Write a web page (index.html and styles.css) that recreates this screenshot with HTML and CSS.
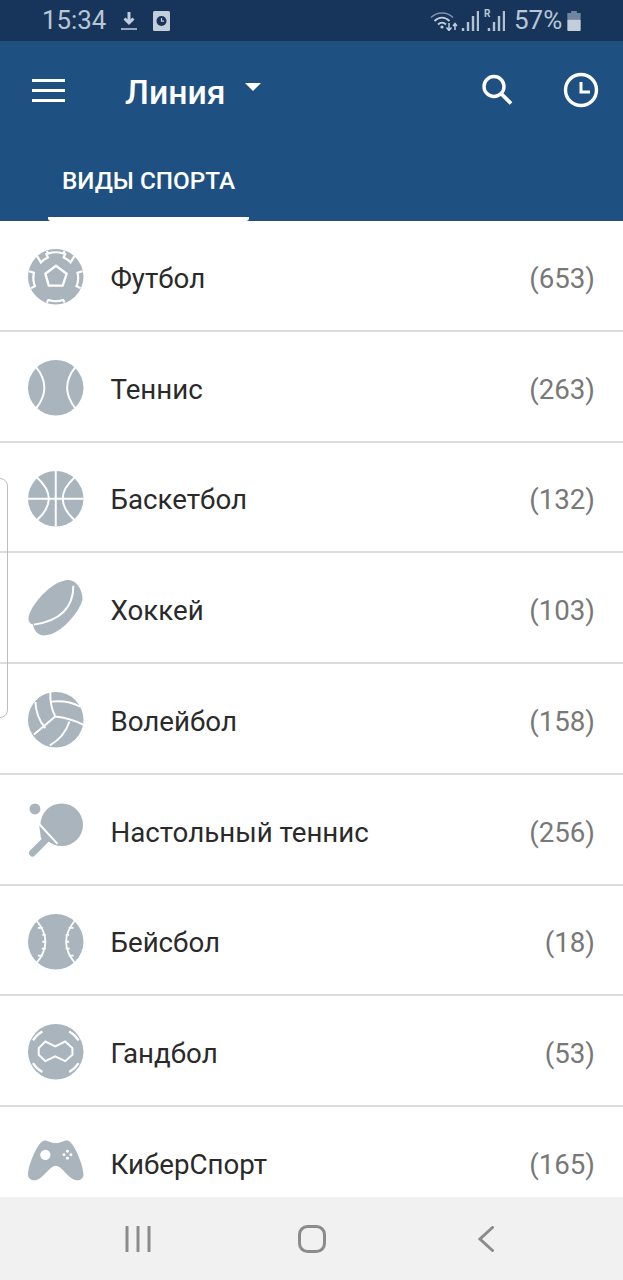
FILE: index.html
```html
<!DOCTYPE html>
<html lang="ru">
<head>
<meta charset="utf-8">
<title>Линия</title>
<link rel="stylesheet" href="styles.css">
</head>
<body>
<div class="app">
  <div class="status">
    <div class="status-left">
      <span class="time">15:34</span>
      <svg class="st-dl" viewBox="0 0 16 20"><path d="M8 1v10M3.500 7.500 8 12l4.500-4.500" fill="none" stroke="#c3cedb" stroke-width="3"/><path d="M0 18h16" stroke="#c3cedb" stroke-width="1.500"/></svg>
      <svg class="st-alarm" viewBox="0 0 17 20"><rect width="17" height="20" rx="1.500" fill="#c3cedb"/><circle cx="8.500" cy="10" r="5" fill="#17355a"/><path d="M8.500 7v3.200h2.500" fill="none" stroke="#c3cedb" stroke-width="1.200"/></svg>
    </div>
    <div class="status-right">
      <svg class="st-wifi" viewBox="0 0 28 20">
        <path d="M1 6.500C7 .5 17 .5 23 6.500" fill="none" stroke="#7f93a9" stroke-width="1.500"/>
        <path d="M4.500 10C9 5.500 15 5.500 19.500 10M8 13.500c2.500-2.500 5.500-2.500 8 0" fill="none" stroke="#c3cedb" stroke-width="1.800"/>
        <circle cx="12" cy="16" r="1.600" fill="#c3cedb"/>
        <path d="M19 12v7M16.500 16.500l2.500 3 2.500-3" fill="none" stroke="#c3cedb" stroke-width="1.500"/>
        <path d="M25 19v-6M23 15l2-2.500 2 2.500" fill="none" stroke="#c3cedb" stroke-width="1.500"/>
      </svg>
      <svg class="st-sig" viewBox="0 0 18 20"><path d="M2 20v-3M7 20v-9M12 20V5M17 20V0" fill="none" stroke="#b4c1d0" stroke-width="2.400"/></svg>
      <div class="st-r">
        <span class="roam">R</span>
        <svg class="st-sig" viewBox="0 0 18 20"><path d="M2 20v-3M7 20v-9M12 20V5M17 20V0" fill="none" stroke="#b4c1d0" stroke-width="2.400"/></svg>
      </div>
      <span class="pct">57%</span>
      <svg class="st-bat" viewBox="0 0 14 21"><path d="M4 0h6v2h4v7H0V2h4z" fill="#6f86a0"/><rect y="9" width="14" height="12" rx="1" fill="#c3cedb"/></svg>
    </div>
  </div>

  <header class="bar">
    <div class="bar-top">
      <button class="burger" aria-label="Меню"><i></i><i></i><i></i></button>
      <div class="title">Линия<span class="caret"></span></div>
      <div class="bar-actions">
        <svg class="ic-search" viewBox="0 0 32 32"><circle cx="13" cy="12.500" r="10" fill="none" stroke="#fff" stroke-width="3.400"/><path d="M20.500 20 30 29.500" stroke="#fff" stroke-width="3.800"/></svg>
        <svg class="ic-clock" viewBox="0 0 36 36"><circle cx="18" cy="18" r="15.500" fill="none" stroke="#fff" stroke-width="3.400"/><path d="M18 10v10h9" fill="none" stroke="#fff" stroke-width="3"/></svg>
      </div>
    </div>
    <div class="tabs"><div class="tab">ВИДЫ СПОРТА</div></div>
  </header>

  <main class="list">
    <div class="row">
      <svg class="sport" viewBox="0 0 56 56"><circle cx="28" cy="28" r="28" fill="#a9b4bd"/>
        <g fill="none" stroke="#fff" stroke-width="2.200">
          <path d="M28.300 17 39 25 35 37H21L17.500 25z" stroke-width="2.400"/>
          <path d="M19 2 20.500 4.500a24 24 0 0 1 15 0L37 2"/>
          <path d="M19 54l1.500-2.500a24 24 0 0 0 15 0L37 54"/>
          <path d="M9 7l4 6.500a22 22 0 0 1 7-5l-2-4.500"/>
          <path d="M47 7l-4 6.500a22 22 0 0 0-7-5l2-4.500"/>
          <path d="M1 22.500l5 1.500a22 22 0 0 0 1 13.500L3 39.500"/>
          <path d="M55 22.500l-5 1.500a22 22 0 0 1-1 13.500l4 2"/>
        </g></svg>
      <span class="name">Футбол</span><span class="count">(653)</span>
    </div>
    <div class="row">
      <svg class="sport" viewBox="0 0 56 56"><circle cx="28" cy="28" r="28" fill="#a9b4bd"/>
        <path d="M8 7Q25 28 8 49M48 7Q31 28 48 49" fill="none" stroke="#fff" stroke-width="2"/></svg>
      <span class="name">Теннис</span><span class="count">(263)</span>
    </div>
    <div class="row">
      <svg class="sport" viewBox="0 0 56 56"><circle cx="28" cy="28" r="28" fill="#a9b4bd"/>
        <path d="M28 0v56M0 28h56M9 6.500Q33 28 9 49.500M47 6.500Q23 28 47 49.500" fill="none" stroke="#fff" stroke-width="2"/></svg>
      <span class="name">Баскетбол</span><span class="count">(132)</span>
    </div>
    <div class="row">
      <svg class="sport" viewBox="0 0 56 56"><path d="M.5 38C1 26 24-1 41-1c7 0 14 9 14 19 0 8-20 37-39 37-6 0-10-5-11-11-3-1-4.500-3-4.500-6z" fill="#a9b4bd"/>
        <path d="M5.800 44Q45.800 38 45.800 4.700" fill="none" stroke="#fff" stroke-width="2"/></svg>
      <span class="name">Хоккей</span><span class="count">(103)</span>
    </div>
    <div class="row">
      <svg class="sport" viewBox="0 0 56 56"><circle cx="28" cy="28" r="28" fill="#a9b4bd"/>
        <path d="M22.500 0Q22 14 27.500 24.700L6 43M24 9.700Q40 8 52.500 14.700M27.500 24.700Q42 26 55.500 33M41.800 29.700Q37 45 22 54M7.500 10Q8 25 17.500 36.500" fill="none" stroke="#fff" stroke-width="2"/></svg>
      <span class="name">Волейбол</span><span class="count">(158)</span>
    </div>
    <div class="row">
      <svg class="sport" viewBox="0 0 56 56"><circle cx="7" cy="6" r="5.500" fill="#a9b4bd"/><circle cx="34" cy="22" r="21.500" fill="#a9b4bd"/>
        <path d="M4.500 50.500 17 38" stroke="#a9b4bd" stroke-width="7" stroke-linecap="round"/>
        <path d="M11 20 31 42 22 39 16 39 13 35z" fill="#a9b4bd"/>
        <path d="M10.800 20.700 29.800 41.300" stroke="#fff" stroke-width="2"/></svg>
      <span class="name">Настольный теннис</span><span class="count">(256)</span>
    </div>
    <div class="row">
      <svg class="sport" viewBox="0 0 56 56"><circle cx="28" cy="28" r="28" fill="#a9b4bd"/>
        <path d="M9 7Q26 28 9 49M47 7Q30 28 47 49M10 14h5M14.500 21h3.500M14.500 28h4M14 35h4M10 42h5M41 14h5M38 21h3.500M37.500 28h4M38 35h4M41 42h5" fill="none" stroke="#fff" stroke-width="1.800"/></svg>
      <span class="name">Бейсбол</span><span class="count">(18)</span>
    </div>
    <div class="row">
      <svg class="sport" viewBox="0 0 56 56"><circle cx="28" cy="28" r="28" fill="#a9b4bd"/>
        <path d="M10.800 24.300 17.500 17.700 27.500 22.700 37.500 17.700 44.800 24.300V31L37.500 37.500 27.500 32.700 17.500 37.500 10.800 31z" fill="none" stroke="#fff" stroke-width="2"/>
        <path d="M5 16.500A26 26 0 0 1 14.500 7.500M41.500 7.500A26 26 0 0 1 51 16.500M51 39.500A26 26 0 0 1 41.500 48.500M14.500 48.500A26 26 0 0 1 5 39.500" fill="none" stroke="#fff" stroke-width="2.200"/></svg>
      <span class="name">Гандбол</span><span class="count">(53)</span>
    </div>
    <div class="row">
      <svg class="sport" viewBox="0 0 56 56"><path d="M15.800 5.700C19 4.500 22 8 28 8s9-3.500 12.500-2.300C46 7 56 30 56 40c0 4-4 6.500-8.500 5.500C41 44 34 31 28 31S15 44 8.500 45.500C4 46.500 0 44 0 40 0 30 10 7 15.800 5.700z" fill="#a9b4bd"/>
        <circle cx="17.500" cy="20" r="5.200" fill="#fff"/>
        <g fill="#fff"><circle cx="39.800" cy="16.500" r="1.500"/><circle cx="39.800" cy="23.500" r="1.500"/><circle cx="36.300" cy="20" r="1.500"/><circle cx="43.300" cy="20" r="1.500"/></g></svg>
      <span class="name">КиберСпорт</span><span class="count">(165)</span>
    </div>
  </main>

  <nav class="navbar">
    <svg class="nav-recent" viewBox="0 0 26 26"><path d="M2 1v24M13 1v24M24 1v24" stroke="#8b8b8b" stroke-width="3" stroke-linecap="round"/></svg>
    <svg class="nav-home" viewBox="0 0 28 28"><rect x="1.500" y="1.500" width="25" height="25" rx="8" fill="none" stroke="#8b8b8b" stroke-width="3"/></svg>
    <svg class="nav-back" viewBox="0 0 16 26"><path d="M14.500 1.500 2 13l12.500 11.500" fill="none" stroke="#8b8b8b" stroke-width="3" stroke-linecap="round"/></svg>
  </nav>

  <div class="drawer-handle"></div>
</div>
</body>
</html>
```

FILE: styles.css
```css
* { box-sizing: border-box; }
html, body { margin: 0; padding: 0; background: #fff; }
body { font-family: Roboto, "Liberation Sans", sans-serif; }
.app { position: relative; display: flex; flex-direction: column; width: 623px; height: 1280px; overflow: hidden; }

.status { flex: none; display: flex; justify-content: space-between; align-items: center; height: 41px; padding: 0 42px 0 42px; background: #17355a; color: #b9c6d5; }
.status-left, .status-right { display: flex; align-items: center; }
.time { font-size: 25.800px; line-height: 41px; width: 79px; }
.st-dl { width: 16px; height: 20px; margin-right: 16px; }
.st-alarm { width: 17px; height: 20px; }
.status-right { position: relative; }
.st-wifi { width: 28px; height: 20px; margin-right: 3px; }
.st-sig { width: 18px; height: 20px; display: block; }
.st-r { position: relative; margin-left: 8px; }
.roam { position: absolute; left: -3px; top: -3px; font-size: 10px; font-weight: 700; }
.pct { font-size: 26px; line-height: 41px; margin-left: 9px; width: 53px; }
.st-bat { width: 14px; height: 20px; }

.bar { flex: none; height: 180px; background: #1f5082; color: #fff; }
.bar-top { display: flex; align-items: center; height: 100px; padding-left: 32px; }
.burger { display: flex; flex-direction: column; gap: 7px; width: 33px; margin: -2px 60px 0 0; padding: 0; border: 0; background: none; }
.burger i { display: block; height: 3px; background: #fff; }
.title { display: flex; font-size: 33.800px; font-weight: 500; line-height: 100px; padding-top: 4px; flex: 1; }
.caret { width: 0; height: 0; margin: 40px 0 0 19px; border-left: 8.500px solid transparent; border-right: 8.500px solid transparent; border-top: 8.500px solid #fff; }
.bar-actions { display: flex; align-items: center; gap: 50px; padding-right: 24px; }
.ic-search { width: 32px; height: 32px; margin-bottom: 2px; }
.ic-clock { width: 36px; height: 36px; margin-bottom: 2px; }
.tabs { display: flex; height: 80px; padding-left: 48px; }
.tab { width: 201px; padding-top: 25px; text-align: center; font-size: 24.300px; font-weight: 500; line-height: 28px; border-bottom: 4px solid #fff; border-radius: 3px; margin-top: 1px; }

.list { flex: 1; overflow: hidden; min-height: 0; }
.row { display: flex; align-items: center; height: 110.750px; padding: 3px 28px 0 27.500px; border-bottom: 2px solid #dcdcdc; }
.sport { flex: none; width: 55.500px; height: 55.500px; margin-right: 27.500px; overflow: visible; }
.name { flex: 1; font-size: 27.700px; color: #2a2a2a; padding-top: 3px; }
.count { font-size: 27.700px; color: #787878; padding-top: 3px; }

.navbar { flex: none; display: flex; align-items: center; height: 83px; padding: 0 129px 0 125px; justify-content: space-between; background: #f1f1f1; }
.nav-recent { width: 26px; height: 26px; }
.nav-home { width: 28px; height: 28px; margin-left: -6px; }
.nav-back { width: 16px; height: 26px; }

.drawer-handle { position: absolute; left: -8px; top: 478px; width: 16px; height: 240px; border: 1.500px solid #bdbdbd; border-radius: 8px; }
```
